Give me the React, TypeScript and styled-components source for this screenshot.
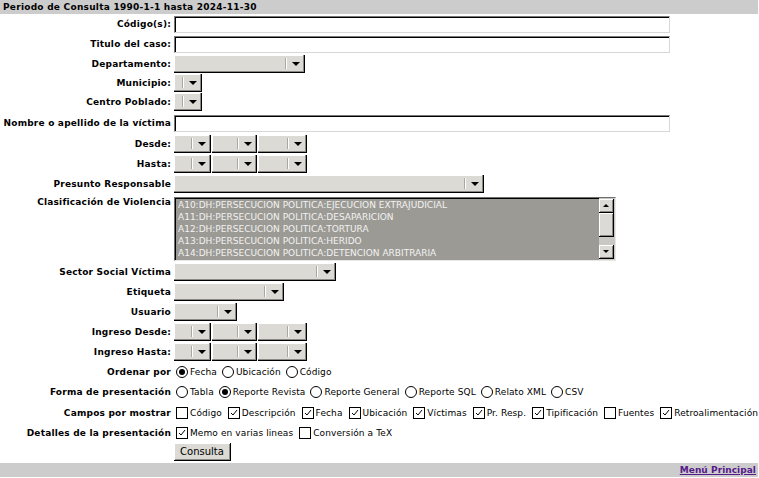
import React from "react";
import styled, { createGlobalStyle } from "styled-components";

const GlobalStyle = createGlobalStyle`
  html, body { margin: 0; padding: 0; background: #fff; }
  body { font-family: "DejaVu Sans", sans-serif; color: #000; }
`;

const Page = styled.div`
  width: 758px;
  display: flex;
  flex-direction: column;
`;

const Bar = styled.div<{ $align?: string }>`
  height: 14px;
  background: #cccccc;
  display: flex;
  align-items: center;
  justify-content: ${(p) => p.$align || "flex-start"};
  padding: 0 2px 0 3px;
  font-weight: bold;
  font-size: 9px;
  letter-spacing: 0.25px;
`;

const Form = styled.div`
  display: flex;
  flex-direction: column;
  margin-bottom: 2px;
`;

const Row = styled.div<{ $h: number; $top?: boolean }>`
  height: ${(p) => p.$h}px;
  display: flex;
  align-items: ${(p) => (p.$top ? "flex-start" : "center")};
`;

const Label = styled.div<{ $pt?: number }>`
  width: 174px;
  flex: none;
  text-align: right;
  font-weight: bold;
  font-size: 9px;
  letter-spacing: 0.2px;
  padding-right: 3px;
  box-sizing: border-box;
  padding-top: ${(p) => p.$pt || 0}px;
  white-space: nowrap;
`;

const Field = styled.div<{ $gap?: number; $pl?: number }>`
  display: flex;
  align-items: center;
  gap: ${(p) => p.$gap ?? 0}px;
  padding-left: ${(p) => p.$pl ?? 0}px;
`;

const TextInput = styled.div`
  width: 496px;
  height: 17px;
  box-sizing: border-box;
  border: 1px solid;
  border-color: #7a7a7a #d8d8d8 #d8d8d8 #7a7a7a;
  box-shadow: inset 1px 1px 0 #000;
  background: #fff;
`;

const SelectBox = styled.div<{ $w: number }>`
  width: ${(p) => p.$w}px;
  height: 18px;
  box-sizing: border-box;
  background: #dcdad5;
  border-right: 1px solid #000;
  border-bottom: 1px solid #000;
  box-shadow: inset -1px -1px 0 #8a8986, inset 1px 1px 0 #fff;
  display: flex;
  justify-content: flex-end;
  align-items: center;
`;

const Sep = styled.div`
  width: 1px;
  height: 11px;
  background: #a8a7a3;
  border-right: 1px solid #fff;
  margin-right: 5px;
`;

const Arrow = styled.div`
  width: 0;
  height: 0;
  border-left: 4px solid transparent;
  border-right: 4px solid transparent;
  border-top: 4px solid #000;
  margin-right: 4px;
  margin-top: 1px;
`;

const Select = ({ w }: { w: number }) => (
  <SelectBox $w={w}>
    <Sep />
    <Arrow />
  </SelectBox>
);

const ListBox = styled.div`
  width: 442px;
  height: 64px;
  box-sizing: border-box;
  border: 1px solid;
  border-color: #6e6e6e #e8e8e8 #e8e8e8 #6e6e6e;
  box-shadow: inset 1px 1px 0 #000;
  display: flex;
  background: #9c9a94;
  margin-top: 3px;
`;

const ListItems = styled.div`
  flex: 1;
  padding: 1px 0 0 3px;
  display: flex;
  flex-direction: column;
`;

const ListItem = styled.div`
  height: 12px;
  line-height: 12px;
  font-size: 9px;
  color: #f2f2f2;
  white-space: nowrap;
`;

const ScrollBar = styled.div`
  width: 15px;
  display: flex;
  flex-direction: column;
  background: #cac8c3;
  padding: 1px 1px 1px 0;
`;

const ScrollBtn = styled.div<{ $h?: number }>`
  height: ${(p) => p.$h || 14}px;
  box-sizing: border-box;
  background: #dcdad5;
  border-right: 1px solid #000;
  border-bottom: 1px solid #000;
  box-shadow: inset 1px 1px 0 #fff, inset -1px -1px 0 #8a8986;
  display: flex;
  align-items: center;
  justify-content: center;
`;

const Tri = styled.div<{ $up?: boolean }>`
  width: 0;
  height: 0;
  border-left: 3px solid transparent;
  border-right: 3px solid transparent;
  ${(p) => (p.$up ? "border-bottom: 3px solid #000;" : "border-top: 3px solid #000;")}
`;

const Track = styled.div`
  flex: 1;
`;

const Opt = styled.label<{ $mr?: number }>`
  display: flex;
  align-items: center;
  font-size: 9px;
  letter-spacing: 0.1px;
  margin-right: ${(p) => p.$mr ?? 5}px;
  white-space: nowrap;
`;

const RadioCircle = styled.span<{ $on?: boolean }>`
  width: 12px;
  height: 12px;
  box-sizing: border-box;
  border: 1px solid #000;
  border-radius: 50%;
  background: #fff;
  display: flex;
  align-items: center;
  justify-content: center;
  margin-right: 2px;
  &::after {
    content: "";
    width: 6px;
    height: 6px;
    border-radius: 50%;
    background: ${(p) => (p.$on ? "#000" : "transparent")};
  }
`;

const CheckBox = styled.span`
  width: 12px;
  height: 12px;
  box-sizing: border-box;
  border: 1px solid #000;
  background: #fff;
  display: flex;
  align-items: flex-start;
  justify-content: center;
  padding-top: 1px;
  margin-right: 2px;
`;

const Radio = ({ on, children }: { on?: boolean; children: React.ReactNode }) => (
  <Opt $mr={5}>
    <RadioCircle $on={on} />
    {children}
  </Opt>
);

const Check = ({ on, children }: { on?: boolean; children: React.ReactNode }) => (
  <Opt $mr={6}>
    <CheckBox>
      {on && (
        <svg width="8" height="7" viewBox="0 0 8 7">
          <path d="M1 4 L3 6 L7 1" fill="none" stroke="#000" strokeWidth="1" />
        </svg>
      )}
    </CheckBox>
    {children}
  </Opt>
);

const Button = styled.div`
  width: 57px;
  height: 18px;
  box-sizing: border-box;
  background: #dcdad5;
  border-right: 1px solid #000;
  border-bottom: 1px solid #000;
  box-shadow: inset 1px 1px 0 #fff, inset -1px -1px 0 #8a8986;
  font-size: 10px;
  display: flex;
  align-items: center;
  justify-content: center;
`;

const MenuLink = styled.a`
  color: #551a8b;
  text-decoration: underline;
  font-weight: bold;
  letter-spacing: 0.05px;
  cursor: pointer;
`;

const DateSelects = () => (
  <Field $gap={1}>
    <Select w={37} />
    <Select w={45} />
    <Select w={49} />
  </Field>
);

const items = [
  "A10:DH:PERSECUCION POLITICA:EJECUCION EXTRAJUDICIAL",
  "A11:DH:PERSECUCION POLITICA:DESAPARICION",
  "A12:DH:PERSECUCION POLITICA:TORTURA",
  "A13:DH:PERSECUCION POLITICA:HERIDO",
  "A14:DH:PERSECUCION POLITICA:DETENCION ARBITRARIA",
];

export default function App() {
  return (
    <Page>
      <GlobalStyle />
      <Bar>Periodo de Consulta 1990-1-1 hasta 2024-11-30</Bar>
      <Form>
        <Row $h={20}>
          <Label>Código(s):</Label>
          <TextInput />
        </Row>
        <Row $h={20}>
          <Label>Titulo del caso:</Label>
          <TextInput />
        </Row>
        <Row $h={19}>
          <Label>Departamento:</Label>
          <Select w={131} />
        </Row>
        <Row $h={19}>
          <Label>Municipio:</Label>
          <Select w={28} />
        </Row>
        <Row $h={20}>
          <Label>Centro Poblado:</Label>
          <Select w={28} />
        </Row>
        <Row $h={22}>
          <Label>Nombre o apellido de la víctima</Label>
          <TextInput />
        </Row>
        <Row $h={20}>
          <Label>Desde:</Label>
          <DateSelects />
        </Row>
        <Row $h={19}>
          <Label>Hasta:</Label>
          <DateSelects />
        </Row>
        <Row $h={21}>
          <Label>Presunto Responsable</Label>
          <Select w={310} />
        </Row>
        <Row $h={68} $top>
          <Label $pt={3}>Clasificación de Violencia</Label>
          <ListBox>
            <ListItems>
              {items.map((t) => (
                <ListItem key={t}>{t}</ListItem>
              ))}
            </ListItems>
            <ScrollBar>
              <ScrollBtn>
                <Tri $up />
              </ScrollBtn>
              <ScrollBtn $h={24} />
              <Track />
              <ScrollBtn>
                <Tri />
              </ScrollBtn>
            </ScrollBar>
          </ListBox>
        </Row>
        <Row $h={20}>
          <Label>Sector Social Víctima</Label>
          <Select w={162} />
        </Row>
        <Row $h={20}>
          <Label>Etiqueta</Label>
          <Select w={110} />
        </Row>
        <Row $h={19}>
          <Label>Usuario</Label>
          <Select w={63} />
        </Row>
        <Row $h={21}>
          <Label>Ingreso Desde:</Label>
          <DateSelects />
        </Row>
        <Row $h={20}>
          <Label>Ingreso Hasta:</Label>
          <DateSelects />
        </Row>
        <Row $h={19}>
          <Label>Ordenar por</Label>
          <Field $pl={2}>
            <Radio on>Fecha</Radio>
            <Radio>Ubicación</Radio>
            <Radio>Código</Radio>
          </Field>
        </Row>
        <Row $h={22}>
          <Label>Forma de presentación</Label>
          <Field $pl={2}>
            <Radio>Tabla</Radio>
            <Radio on>Reporte Revista</Radio>
            <Radio>Reporte General</Radio>
            <Radio>Reporte SQL</Radio>
            <Radio>Relato XML</Radio>
            <Radio>CSV</Radio>
          </Field>
        </Row>
        <Row $h={20}>
          <Label>Campos por mostrar</Label>
          <Field $pl={2}>
            <Check>Código</Check>
            <Check on>Descripción</Check>
            <Check on>Fecha</Check>
            <Check on>Ubicación</Check>
            <Check on>Víctimas</Check>
            <Check on>Pr. Resp.</Check>
            <Check on>Tipificación</Check>
            <Check>Fuentes</Check>
            <Check on>Retroalimentación</Check>
          </Field>
        </Row>
        <Row $h={19}>
          <Label>Detalles de la presentación</Label>
          <Field $pl={2}>
            <Check on>Memo en varias lineas</Check>
            <Check>Conversión a TeX</Check>
          </Field>
        </Row>
        <Row $h={19}>
          <Label />
          <Button>Consulta</Button>
        </Row>
      </Form>
      <Bar $align="flex-end">
        <MenuLink>Menú Principal</MenuLink>
      </Bar>
    </Page>
  );
}
